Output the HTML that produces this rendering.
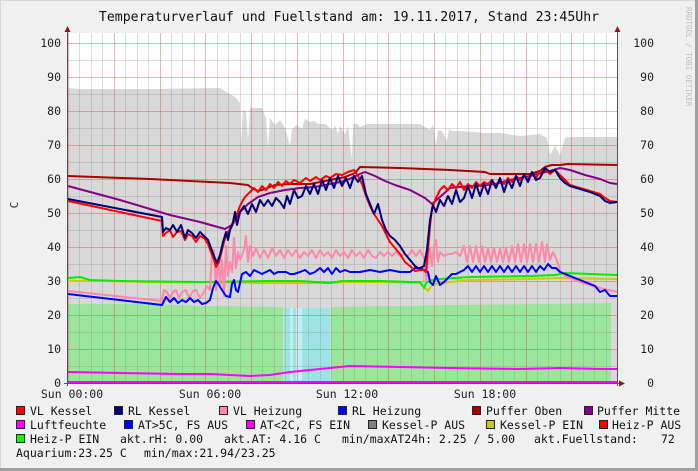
<!DOCTYPE html>
<html><head><meta charset="utf-8"><style>
html,body{margin:0;padding:0;background:#f0f0f0;}
body{width:698px;height:471px;position:relative;overflow:hidden;font-family:"DejaVu Sans Mono","Liberation Mono",monospace;}
.frame{position:absolute;left:0;top:0;width:695px;height:468px;border-right:3px solid #a0a0a0;border-bottom:3px solid #a0a0a0;box-shadow:inset 1px 1px 0 #d8d8d8;}
svg{position:absolute;left:0;top:0;}
</style></head><body>
<div class="frame"></div>
<svg width="698" height="471" xmlns="http://www.w3.org/2000/svg" font-family="DejaVu Sans Mono, Liberation Mono, monospace">
<rect x="68" y="33" width="549" height="350" fill="#ffffff"/>
<!-- fuellstand -->
<polygon fill="#d8d8d8" points="68,383 68,88 80,89 150,89 220,88 225,91 235,97 240,103 241,145 243,110 246,112 248,140 250,108 262,108 266,118 268,148 270,118 275,125 280,120 285,128 290,146 292,129 297,125 302,129 305,119 310,122 314,121 318,124 325,124 328,126 330,128 333,130 335,125 338,134 340,126 345,134 348,126 352,160 353,124 358,124 360,127 367,124 420,124 425,127 430,130 433,125 436,145 438,130 442,131 447,141 449,129 452,131 460,131 485,133 500,133 520,136 540,134 547,138 550,155 555,146 560,155 565,138 570,137 617,137 617,383"/>
<polygon fill="#9ae69a" points="68,304 150,304 200,306 283,307 283,383 68,383"/>
<rect x="284" y="308" width="6" height="75" fill="#9ee4e6"/>
<rect x="290" y="308" width="3" height="75" fill="#c4eef0"/>
<rect x="293" y="308" width="3" height="75" fill="#9ee4e6"/>
<rect x="296" y="308" width="6" height="75" fill="#c4eef0"/>
<rect x="302" y="308" width="28" height="75" fill="#9ee4e6"/>
<polygon fill="#9ae69a" points="331,307 400,306 450,305 550,304 611,303 611,383 331,383"/>
<!-- grid -->
<g id="grid"></g>
<g fill="none" stroke-width="2" stroke-linejoin="round">
<polyline stroke="#ff00ff" points="68,372 120,373 180,374 210,374 230,375 250,376 270,375 290,372 310,370 330,368 350,366 400,367 450,368 520,369 560,368 600,369 617,369"/>
<polyline stroke="#cccc00" points="68,281 100,281 150,282 200,282 260,283 300,283 330,283 345,282 380,282 420,283 424,287 428,291 432,285 440,283 470,280 530,279 560,278 617,279"/>
<polyline stroke="#00ee00" points="68,278 80,277 90,280 120,281 200,282 270,281 300,281 330,283 342,281 380,281 410,282 420,282 424,288 426,283 432,280 440,279 470,277 530,276 555,275 565,273 617,275"/>
<polyline stroke="#ff88aa" points="68,291 162,301 164,290 167,292 170,298 173,292 176,290 179,298 182,292 186,290 189,298 193,291 196,290 200,298 204,292 207,286 210,290 212,252 214,250 216,290 218,258 220,284 222,260 224,296 226,246 228,276 230,262 232,272 234,238 236,268 238,252 240,260 244,250 246,236 248,262 250,246 253,256 256,248 260,258 264,250 268,258 272,248 276,256 280,250 284,258 288,250 292,256 296,250 300,258 304,252 308,256 312,250 316,258 320,250 324,256 328,252 332,258 336,250 340,256 344,252 348,258 352,250 356,256 360,252 364,258 368,250 372,256 376,258 380,252 384,256 388,252 392,256 396,252 400,256 404,254 408,256 412,250 416,256 420,250 424,258 426,280 428,260 430,248 432,266 434,246 436,240 438,262 440,252 444,256 448,254 452,254 456,252 460,256 464,246 467,262 470,246 473,262 476,246 479,262 482,246 485,262 488,248 491,262 494,248 497,262 500,248 503,262 506,248 509,262 512,246 515,262 518,244 521,262 524,244 527,262 530,244 533,262 536,244 539,262 542,242 545,262 547,244 550,260 553,252 556,258 560,270 565,276 580,282 600,288 617,292"/>
<polyline stroke="#0000ff" points="68,294 162,305 164,301 166,297 170,302 174,298 178,303 182,300 186,302 190,298 194,302 198,300 202,304 206,303 210,300 213,288 216,281 219,285 222,290 226,296 230,297 232,284 234,280 236,290 238,292 242,274 246,272 250,276 254,270 258,272 262,274 266,272 270,270 274,274 278,272 282,272 286,272 290,274 294,274 300,272 305,270 310,274 315,272 320,268 324,272 328,268 332,274 336,268 340,272 345,270 350,272 360,272 370,270 380,272 390,270 400,272 410,272 415,268 420,268 424,270 428,272 430,282 433,285 436,276 440,285 444,282 448,278 452,274 456,274 460,272 464,270 468,266 472,272 476,266 480,272 484,266 488,272 492,266 496,272 500,266 504,272 508,266 512,272 516,266 520,272 524,266 528,272 532,266 536,272 540,266 544,270 548,264 552,268 556,268 560,272 570,276 585,282 595,286 600,292 605,290 610,296 617,296"/>
<polyline stroke="#aa0000" points="68,176 150,179 230,183 248,185 252,188 258,191 265,189 275,185 290,184 310,184 330,180 345,177 355,173 360,167 400,168 450,170 485,172 490,174 530,174 540,171 545,167 552,165 560,165 568,164 617,165"/>
<polyline stroke="#880088" points="68,186 120,200 170,215 200,222 225,229 232,225 240,212 248,204 258,197 270,193 285,190 300,188 315,187 330,184 345,181 360,174 365,172 375,176 385,181 395,185 410,190 425,198 432,204 440,197 450,188 470,186 480,186 495,184 510,180 530,176 550,171 560,168 570,170 585,175 600,179 610,183 617,184"/>
<polyline stroke="#ff0000" points="68,201 162,221 163,236 166,233 170,230 173,237 177,232 181,231 185,240 188,234 192,236 196,242 200,236 204,238 208,244 211,252 214,260 216,267 219,262 222,250 225,238 228,232 231,228 234,222 237,214 240,206 243,200 246,196 250,192 254,188 258,192 262,186 266,190 270,184 274,188 278,182 282,186 286,181 290,184 294,180 300,183 306,178 310,181 316,177 320,180 326,176 330,178 336,174 342,175 348,172 354,170 358,176 362,184 366,196 370,206 374,214 378,220 382,226 386,234 390,242 395,248 400,254 405,262 410,266 415,271 420,270 424,270 426,272 428,250 430,226 432,208 436,198 440,190 444,186 448,190 452,184 456,188 460,182 464,190 468,184 472,188 476,182 480,186 484,182 488,184 492,180 496,186 500,180 504,184 508,178 512,182 516,176 520,180 524,176 528,180 532,174 536,178 540,172 546,170 550,174 555,170 560,175 565,180 570,185 580,188 590,191 600,194 605,198 610,201 617,202"/>
<polyline stroke="#000077" points="68,199 162,217 163,232 166,228 170,230 173,225 177,232 181,225 185,238 188,230 192,233 196,238 200,232 204,236 208,240 211,248 214,256 217,263 220,255 223,242 226,232 228,240 230,230 233,222 235,212 237,225 240,212 244,206 248,214 252,204 256,212 260,200 264,206 268,200 272,206 276,198 280,202 284,208 287,196 290,204 294,190 298,198 302,196 306,186 310,194 314,184 318,194 322,180 326,190 330,178 334,188 338,176 342,186 346,178 350,188 354,176 358,182 362,176 366,194 370,204 374,214 378,204 382,220 386,230 390,236 395,240 400,246 405,254 410,260 415,266 418,268 420,268 424,266 427,250 430,220 433,205 436,212 440,200 444,206 448,196 452,204 456,190 460,202 464,198 468,186 472,198 476,184 480,196 484,184 488,194 492,180 496,188 500,178 504,192 508,180 512,188 516,176 520,186 524,174 528,182 532,172 536,180 540,178 545,168 550,172 555,170 560,178 565,183 570,186 580,189 590,192 600,196 605,201 610,203 617,202"/>
<line x1="68" y1="382" x2="617" y2="382" stroke="#ff00ff"/>
</g>
<!-- axes -->
<g stroke="#555" stroke-width="1">
<line x1="67.5" y1="30" x2="67.5" y2="386"/>
<line x1="617.5" y1="30" x2="617.5" y2="386"/>
<line x1="64" y1="383.5" x2="620" y2="383.5"/>
</g>
<g fill="#8b1a1a">
<polygon points="64.5,32 67.5,26 70.5,32"/>
<polygon points="614.5,32 617.5,26 620.5,32"/>
<polygon points="619,380.5 625,383.5 619,386.5"/>
</g>
<g font-size="11.5" fill="#222" text-anchor="end">
<text x="61" y="47">100</text><text x="61" y="81">90</text><text x="61" y="115">80</text><text x="61" y="149">70</text><text x="61" y="183">60</text><text x="61" y="217">50</text><text x="61" y="251">40</text><text x="61" y="285">30</text><text x="61" y="319">20</text><text x="61" y="353">10</text><text x="61" y="387">0</text>
</g>
<g font-size="11.5" fill="#222" text-anchor="end">
<text x="654" y="47">100</text><text x="654" y="81">90</text><text x="654" y="115">80</text><text x="654" y="149">70</text><text x="654" y="183">60</text><text x="654" y="217">50</text><text x="654" y="251">40</text><text x="654" y="285">30</text><text x="654" y="319">20</text><text x="654" y="353">10</text><text x="654" y="387">0</text>
</g>
<g font-size="11.5" fill="#222" text-anchor="middle">
<text x="72" y="398">Sun 00:00</text><text x="210" y="398">Sun 06:00</text><text x="347" y="398">Sun 12:00</text><text x="485" y="398">Sun 18:00</text>
</g>
<text x="18" y="205" font-size="11" fill="#222" transform="rotate(-90 18 205)" text-anchor="middle">C</text>
<text x="349" y="21" font-size="13.2" fill="#111" text-anchor="middle">Temperaturverlauf und Fuellstand am: 19.11.2017, Stand 23:45Uhr</text>
<text x="686" y="7" font-size="7.5" fill="#c0c0c0" transform="rotate(90 686 7)">RRDTOOL / TOBI OETIKER</text>
<!-- legend -->
<g stroke="#222" stroke-width="1">
<rect x="16.5" y="406.5" width="8" height="8" fill="#ff0000"/>
<rect x="114.5" y="406.5" width="8" height="8" fill="#000077"/>
<rect x="219.5" y="406.5" width="8" height="8" fill="#ff88aa"/>
<rect x="338.5" y="406.5" width="8" height="8" fill="#0000ff"/>
<rect x="472.5" y="406.5" width="8" height="8" fill="#aa0000"/>
<rect x="584.5" y="406.5" width="8" height="8" fill="#880088"/>
<rect x="16.5" y="420.5" width="8" height="8" fill="#ff00ff"/>
<rect x="124.5" y="420.5" width="8" height="8" fill="#0000ff"/>
<rect x="246.5" y="420.5" width="8" height="8" fill="#ff00ff"/>
<rect x="368.5" y="420.5" width="8" height="8" fill="#808080"/>
<rect x="486.5" y="420.5" width="8" height="8" fill="#cccc00"/>
<rect x="599.5" y="420.5" width="8" height="8" fill="#ff0000"/>
<rect x="16.5" y="434.5" width="8" height="8" fill="#00ff00"/>
</g>
<g font-size="11.5" fill="#111" xml:space="preserve">
<text x="30" y="415">VL Kessel</text><text x="128" y="415">RL Kessel</text><text x="233" y="415">VL Heizung</text><text x="352" y="415">RL Heizung</text><text x="486" y="415">Puffer Oben</text><text x="597" y="415">Puffer Mitte</text>
<text x="30" y="429">Luftfeuchte</text><text x="138" y="429">AT&gt;5C, FS AUS</text><text x="260" y="429">AT&lt;2C, FS EIN</text><text x="382" y="429">Kessel-P AUS</text><text x="500" y="429">Kessel-P EIN</text><text x="612" y="429">Heiz-P AUS</text>
<text x="30" y="443">Heiz-P EIN</text><text x="120" y="443">akt.rH: 0.00</text><text x="224" y="443">akt.AT: 4.16 C</text><text x="342" y="443">min/maxAT24h: 2.25 / 5.00</text><text x="534" y="443">akt.Fuellstand:</text><text x="661" y="443">72</text>
<text x="16" y="457">Aquarium:23.25 C</text><text x="144" y="457">min/max:21.94/23.25</text>
</g>
</svg>
<script>
(function(){
var g=document.getElementById('grid'),ns='http://www.w3.org/2000/svg',s='';
for(var i=0;i<=48;i++){var x=68+i*11.4375;var maj=(i%4==0);
s+='<line x1="'+(Math.round(x)+0.5)+'" y1="33" x2="'+(Math.round(x)+0.5)+'" y2="383" stroke="'+(maj?'rgba(220,80,80,0.45)':'rgba(140,140,140,0.3)')+'" stroke-width="1"/>';}
for(var j=0;j<=20;j++){var y=383-j*17;var maj=(j%2==0);
s+='<line x1="68" y1="'+(y+0.5)+'" x2="617" y2="'+(y+0.5)+'" stroke="'+(maj?'rgba(220,80,80,0.45)':'rgba(140,140,140,0.3)')+'" stroke-width="1"/>';}
g.innerHTML=s;
})();
</script>
</body></html>
